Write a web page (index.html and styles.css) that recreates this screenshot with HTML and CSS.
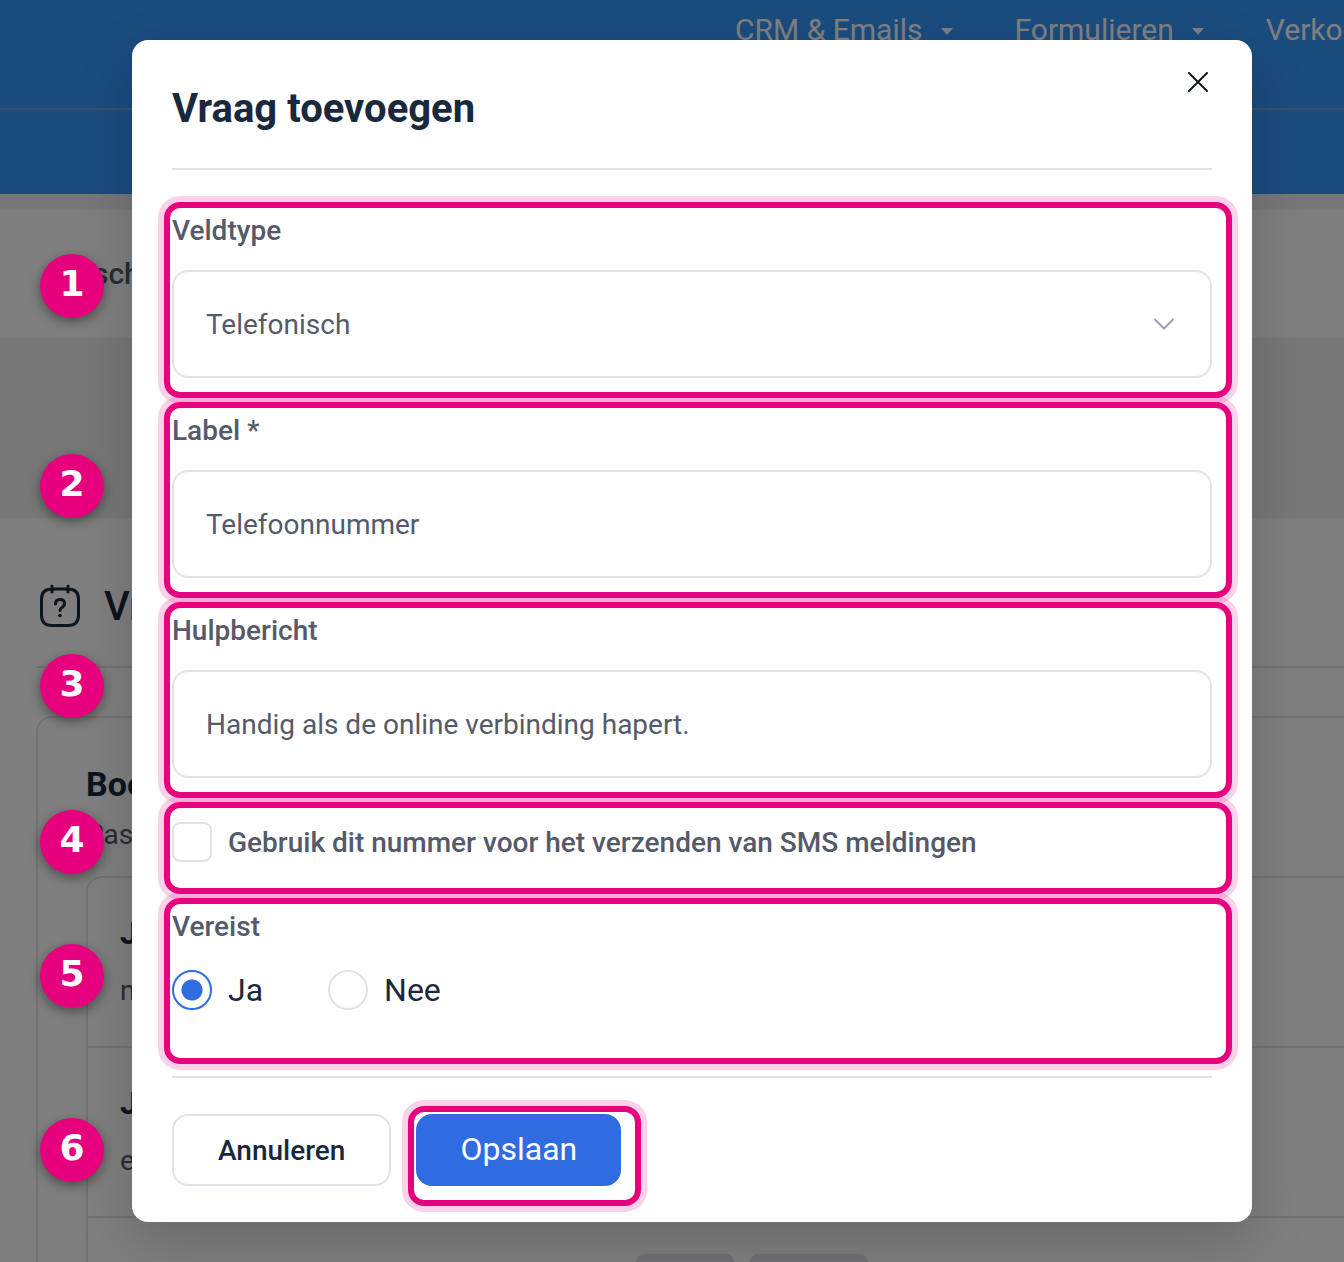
FILE: index.html
```
<!DOCTYPE html>
<html lang="nl">
<head>
    <meta charset="UTF-8">
    <meta name="viewport" content="width=device-width, initial-scale=1.0">
    <title>Vraag toevoegen</title>
    <link rel="stylesheet" href="styles.css">
</head>
<body>
    <!-- Page behind the modal -->
    <div class="page">
        <header class="topbar">
            <nav class="main-nav">
                <a href="#">CRM &amp; Emails <span class="caret"></span></a>
                <a href="#">Formulieren <span class="caret"></span></a>
                <a href="#">Verkoop</a>
            </nav>
        </header>
        <div class="subbar">sch</div>
        <main class="content">
            <h1 class="section-title">
                <svg width="40" height="44" viewBox="0 0 40 44" fill="none" stroke="currentColor" stroke-width="3" stroke-linecap="round" aria-hidden="true">
                    <path d="M12 5H28M12 5Q1.500 5 1.500 15V31Q1.500 41.500 12 41.500H28Q38.500 41.500 38.500 31V15Q38.500 5 28 5M12 2V8M28 2V8"/>
                    <path d="M15.500 20Q15.500 15.500 20 15.500Q24.500 15.500 24.500 19.500Q24.500 22 22 23.500Q20 24.700 20 26.500"/>
                    <circle cx="20" cy="31.500" r="1.800" fill="currentColor" stroke="none"/>
                </svg>
                Vragen
            </h1>
            <section class="card">
                <h2>Boekingsformulier</h2>
                <p>Pas aan</p>
                <ul class="questions">
                    <li><b>Je naam</b><span>naam</span></li>
                    <li><b>Je e-mail</b><span>e-mail</span></li>
                    <li class="tagged"><b>flink</b><b>beeld</b><span class="tag"></span><span class="tag tag-wide"></span></li>
                </ul>
            </section>
        </main>
    </div>

    <div class="overlay">
        <form class="modal" role="dialog" aria-labelledby="modal-title">
            <button type="button" class="close-btn" aria-label="Sluiten">
                <svg width="20" height="20" viewBox="0 0 20 20" fill="none" stroke="currentColor" stroke-width="2" stroke-linecap="round"><path d="M1 1L19 19M19 1L1 19"/></svg>
            </button>
            <h2 class="modal-title" id="modal-title">Vraag toevoegen</h2>

            <div class="modal-body">
                <div class="form-group step">
                    <span class="badge">1</span>
                    <label for="field-type">Veldtype</label>
                    <div class="select-wrap">
                        <select id="field-type">
                            <option>Telefonisch</option>
                        </select>
                        <svg class="chevron" width="22" height="12" viewBox="0 0 22 12" fill="none" stroke="currentColor" stroke-width="2" stroke-linecap="round"><path d="M2 1.500L11 10.500L20 1.500"/></svg>
                    </div>
                </div>
                <div class="form-group step">
                    <span class="badge">2</span>
                    <label for="field-label">Label *</label>
                    <input type="text" id="field-label" value="Telefoonnummer" required>
                </div>
                <div class="form-group step">
                    <span class="badge">3</span>
                    <label for="field-help">Hulpbericht</label>
                    <input type="text" id="field-help" value="Handig als de online verbinding hapert.">
                </div>
                <div class="check-row step">
                    <span class="badge">4</span>
                    <input type="checkbox" id="use-sms">
                    <label for="use-sms">Gebruik dit nummer voor het verzenden van SMS meldingen</label>
                </div>
                <div class="radio-group step" role="radiogroup" aria-labelledby="required-label">
                    <span class="badge">5</span>
                    <span class="group-label" id="required-label">Vereist</span>
                    <div class="radio-options">
                        <label><input type="radio" name="required" value="ja" checked>Ja</label>
                        <label><input type="radio" name="required" value="nee">Nee</label>
                    </div>
                </div>
            </div>

            <div class="modal-footer">
                <span class="badge">6</span>
                <button type="button" class="cancel-btn">Annuleren</button>
                <div class="step">
                    <button type="submit" class="save-btn">Opslaan</button>
                </div>
            </div>
        </form>
    </div>
</body>
</html>
```

FILE: styles.css
```
* {
    box-sizing: border-box;
}

body {
    margin: 0;
    height: 100vh;
    overflow: hidden;
    position: relative;
    font-family: Roboto, "Liberation Sans", sans-serif;
    font-size: 28px;
    color: #19293d;
}

h1, h2, p, ul {
    margin: 0;
    padding: 0;
}

input, select, button {
    font-family: inherit;
    font-size: inherit;
    margin: 0;
}

/* Page */
.page {
    height: 100%;
    overflow: hidden;
    background: #fff;
}

.topbar {
    padding-bottom: 84px;
    background: #3498fd;
}

.main-nav {
    display: flex;
    justify-content: flex-start;
    gap: 62px;
    height: 110px;
    padding: 10px 0 0 735px;
    border-bottom: 2px solid #78a4d8;
}

.main-nav a {
    flex: none;
    display: flex;
    align-items: center;
    gap: 18px;
    height: 38px;
    font-size: 30px;
    color: #fff;
    text-decoration: none;
    white-space: nowrap;
}

.caret {
    margin-top: 4px;
    border: 6px solid transparent;
    border-top: 7px solid #fff;
    border-bottom: none;
}

.subbar {
    padding-left: 93px;
    border-top: 16px solid #eee;
    font-size: 30px;
    font-weight: 500;
    line-height: 128px;
    color: #545a6a;
}

.content {
    padding-left: 36px;
    border-top: 180px solid #eee;
}

.section-title {
    display: flex;
    align-items: center;
    gap: 24px;
    height: 150px;
    padding: 28px 0 0 4px;
    border-bottom: 2px solid #dfe3e8;
    font-size: 40px;
    font-weight: 500;
}

.card {
    margin-top: 48px;
    padding: 42px 0 0 48px;
    border: 2px solid #dfe3e8;
    border-right: none;
    border-radius: 16px 0 0 0;
}

.card h2 {
    font-size: 34px;
    font-weight: 700;
    line-height: 48px;
}

.card p {
    line-height: 54px;
    color: #545a6a;
}

.questions {
    margin-top: 14px;
    border: 2px solid #dfe3e8;
    border-right: none;
    border-radius: 16px 0 0 0;
    list-style: none;
}

.questions li {
    display: flex;
    flex-direction: column;
    gap: 16px;
    height: 170px;
    padding: 34px 32px;
    border-bottom: 2px solid #dfe3e8;
    line-height: 42px;
}

.questions b {
    font-size: 32px;
}

.questions span {
    color: #545a6a;
}

.questions .tagged {
    flex-direction: row;
    padding: 36px 0 0 138px;
    line-height: 40px;
}

.tagged b {
    width: 256px;
}

.tagged b + b {
    width: 122px;
}

.tag {
    width: 98px;
    height: 44px;
    border-radius: 8px;
    background: #dfe3e8;
}

.tag-wide {
    width: 118px;
}

/* Modal */
.overlay {
    position: absolute;
    inset: 0;
    padding: 40px 92px 40px 132px;
    background: rgba(0, 0, 0, 0.5);
}

.modal {
    position: relative;
    padding: 36px 40px;
    border-radius: 16px;
    background: #fff;
    box-shadow: 0 20px 56px rgba(0, 0, 0, 0.18);
}

.close-btn {
    position: absolute;
    top: 32px;
    right: 44px;
    display: flex;
    padding: 0;
    border: none;
    background: none;
    color: #111820;
    cursor: pointer;
}

.modal-title {
    padding-bottom: 26px;
    border-bottom: 2px solid #dfe3e8;
    font-size: 40px;
    font-weight: 700;
    line-height: 66px;
}

.modal-body {
    display: flex;
    flex-direction: column;
    gap: 32px;
    padding: 40px 0 32px;
}

.form-group {
    display: flex;
    flex-direction: column;
    gap: 18px;
}

.form-group label,
.check-row label,
.group-label {
    font-weight: 500;
    line-height: 42px;
    color: #545a6a;
}

.check-row label {
    padding-top: 2px;
}

.form-group input,
.form-group select {
    width: 100%;
    height: 108px;
    padding: 0 32px;
    border: 2px solid #dfe3e8;
    border-radius: 16px;
    background: #fff;
    color: #545a6a;
    appearance: none;
}

.select-wrap {
    position: relative;
    display: flex;
}

.chevron {
    position: absolute;
    top: 48px;
    right: 37px;
    color: #98a1b0;
    pointer-events: none;
}

.check-row {
    display: flex;
    align-items: center;
    gap: 16px;
    height: 64px;
}

.check-row input,
.radio-options input {
    flex: none;
    width: 40px;
    height: 40px;
    border: 2px solid #dfe3e8;
    border-radius: 8px;
    background: #fff;
    appearance: none;
}

.radio-options {
    display: flex;
    gap: 65px;
    padding: 22px 0 34px;
}

.radio-options label {
    display: flex;
    align-items: center;
    gap: 16px;
    font-size: 32px;
    line-height: 38px;
}

.group-label {
    display: block;
}

.radio-options input {
    border-radius: 50%;
}

.radio-options input:checked {
    border-color: #2f6be1;
    background: radial-gradient(circle, #2f6be1 10px, #fff 11px);
}

.modal-footer {
    position: relative;
    display: flex;
    gap: 25px;
    padding-top: 36px;
    border-top: 2px solid #dfe3e8;
}

.cancel-btn,
.save-btn {
    height: 72px;
    padding: 0 44px;
    border: 2px solid #dfe3e8;
    border-radius: 16px;
    background: #fff;
    color: #19293d;
    font-weight: 500;
    cursor: pointer;
}

.save-btn {
    display: block;
    padding: 0 42px 2px;
    border-color: #2f6be1;
    background: #2f6be1;
    color: #fff;
    font-size: 32px;
    font-weight: 400;
}

/* Numbered highlights */
.step {
    position: relative;
}

.step::after {
    content: "";
    position: absolute;
    inset: -8px -20px -20px -8px;
    border: 6px solid #e6007e;
    border-radius: 16px;
    box-shadow: 0 0 0 6px rgba(230, 0, 126, 0.18);
    pointer-events: none;
}

.badge {
    position: absolute;
    top: 44px;
    left: -132px;
    width: 64px;
    height: 64px;
    border-radius: 50%;
    background: #e6007e;
    box-shadow: 0 4px 12px rgba(0, 0, 0, 0.4);
    color: #fff;
    font-family: "DejaVu Sans", sans-serif;
    font-size: 36px;
    font-weight: 700;
    line-height: 60px;
    text-align: center;
}

.check-row .badge {
    top: 0;
}

.radio-group .badge {
    top: 38px;
}

.modal-footer .badge {
    top: 40px;
}
```
